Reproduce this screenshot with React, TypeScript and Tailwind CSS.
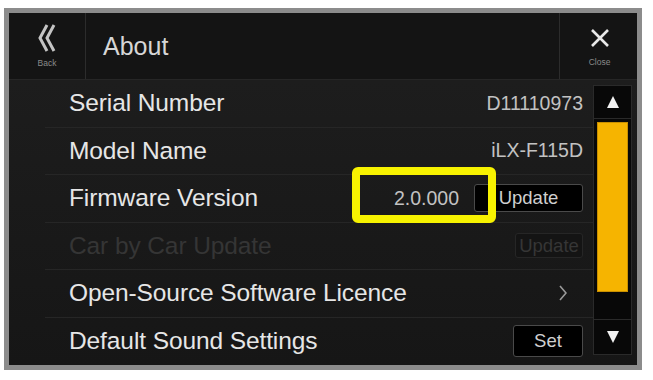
import React from 'react'

const font = "font-['Liberation_Sans',Arial,sans-serif]"

function Row({
  label,
  dim,
  last,
  children,
}: {
  label: string
  dim?: boolean
  last?: boolean
  children?: React.ReactNode
}) {
  return (
    <div className={`ml-[36px] h-[47.5px] flex items-center pl-[24px] pr-[10px] ${last ? '' : 'border-b border-[#262626]'}`}>
      <span className={`text-[24.5px] leading-none tracking-[-0.1px] ${dim ? 'text-[#353535]' : 'text-[#e6e6e6]'}`}>{label}</span>
      <div className="ml-auto flex items-center">{children}</div>
    </div>
  )
}

function Value({ children }: { children: React.ReactNode }) {
  return <span className="text-[19.5px] leading-none text-[#c2c2c2]">{children}</span>
}

function Btn({ label, w, h, dim }: { label: string; w: number; h: number; dim?: boolean }) {
  return (
    <div
      className={`flex items-center justify-center rounded-[3px] border ${
        dim ? 'border-[#262626] bg-[#141414] text-[#363636]' : 'border-[#4a4a4a] bg-black text-[#cfcfcf]'
      } text-[18.5px] leading-none`}
      style={{ width: w, height: h }}
    >
      {label}
    </div>
  )
}

export default function App() {
  return (
    <div className={`w-[653px] h-[380px] bg-white pt-[8px] pl-[4px] ${font}`}>
      <div className="relative w-[638px] h-[362px] border-[5px] border-[#8c8c8c] bg-[#1a1a1a] flex flex-col">
        {/* header */}
        <div className="h-[67px] flex bg-[#141414] border-b border-[#262626]">
          <div className="w-[77px] border-r border-[#2c2c2c] flex flex-col items-center pt-[10px]">
            <svg width="20" height="30" viewBox="0 0 20 30" fill="none">
              <polyline points="10,2 3,15 10,28" stroke="#c4c4c4" strokeWidth="3" strokeLinejoin="miter" />
              <polyline points="17,2 10,15 17,28" stroke="#c4c4c4" strokeWidth="3" strokeLinejoin="miter" />
            </svg>
            <span className="mt-[6px] text-[8.5px] leading-none text-[#8a8a8a]">Back</span>
          </div>
          <div className="flex-1 flex items-center pl-[17px]">
            <span className="text-[25px] leading-none text-[#d6d6d6]">About</span>
          </div>
          <div className="w-[78px] border-l border-[#2c2c2c] flex flex-col items-center pt-[16px] pl-[2px]">
            <svg width="20" height="18" viewBox="0 0 20 18">
              <path d="M2 1 L18 17 M18 1 L2 17" stroke="#e8e8e8" strokeWidth="2.6" />
            </svg>
            <span className="mt-[11px] text-[8.5px] leading-none text-[#8a8a8a]">Close</span>
          </div>
        </div>

        {/* body */}
        <div className="flex-1 flex bg-gradient-to-b from-[#1d1d1d] to-[#161616]">
          <div className="flex-1">
            <Row label="Serial Number">
              <Value>D11110973</Value>
            </Row>
            <Row label="Model Name">
              <Value>iLX-F115D</Value>
            </Row>
            <Row label="Firmware Version">
              <Value>2.0.000</Value>
              <div className="ml-[15px]">
                <Btn label="Update" w={109} h={28} />
              </div>
            </Row>
            <Row label="Car by Car Update" dim>
              <Btn label="Update" w={68} h={25} dim />
            </Row>
            <Row label="Open-Source Software Licence">
              <svg className="mr-[16px]" width="8" height="16" viewBox="0 0 8 16" fill="none">
                <polyline points="1,1 7,8 1,15" stroke="#9a9a9a" strokeWidth="1.6" />
              </svg>
            </Row>
            <Row label="Default Sound Settings" last>
              <Btn label="Set" w={70} h={32} />
            </Row>
          </div>

          {/* scrollbar */}
          <div className="w-[44px] pt-[5px] pb-[10px] pr-[5px]">
            <div className="h-full flex flex-col bg-[#080808] border border-[#2a2a2a]">
              <div className="h-[33px] flex items-center justify-center border-b border-[#2a2a2a]">
                <svg width="12" height="12" viewBox="0 0 12 12">
                  <polygon points="6,0 12,12 0,12" fill="#f2f2f2" />
                </svg>
              </div>
              <div className="flex-1 px-[3px] pt-[3px]">
                <div className="h-[170px] bg-[#f6b400] border border-[#c98f00]" />
              </div>
              <div className="h-[35px] flex items-center justify-center border-t border-[#2a2a2a]">
                <svg width="12" height="12" viewBox="0 0 12 12">
                  <polygon points="0,0 12,0 6,12" fill="#f2f2f2" />
                </svg>
              </div>
            </div>
          </div>
        </div>

        {/* annotation highlight */}
        <div className="absolute left-[343px] top-[154px] w-[144px] h-[56px] border-[8px] border-[#f7f200] rounded-[6px]" />
      </div>
    </div>
  )
}
